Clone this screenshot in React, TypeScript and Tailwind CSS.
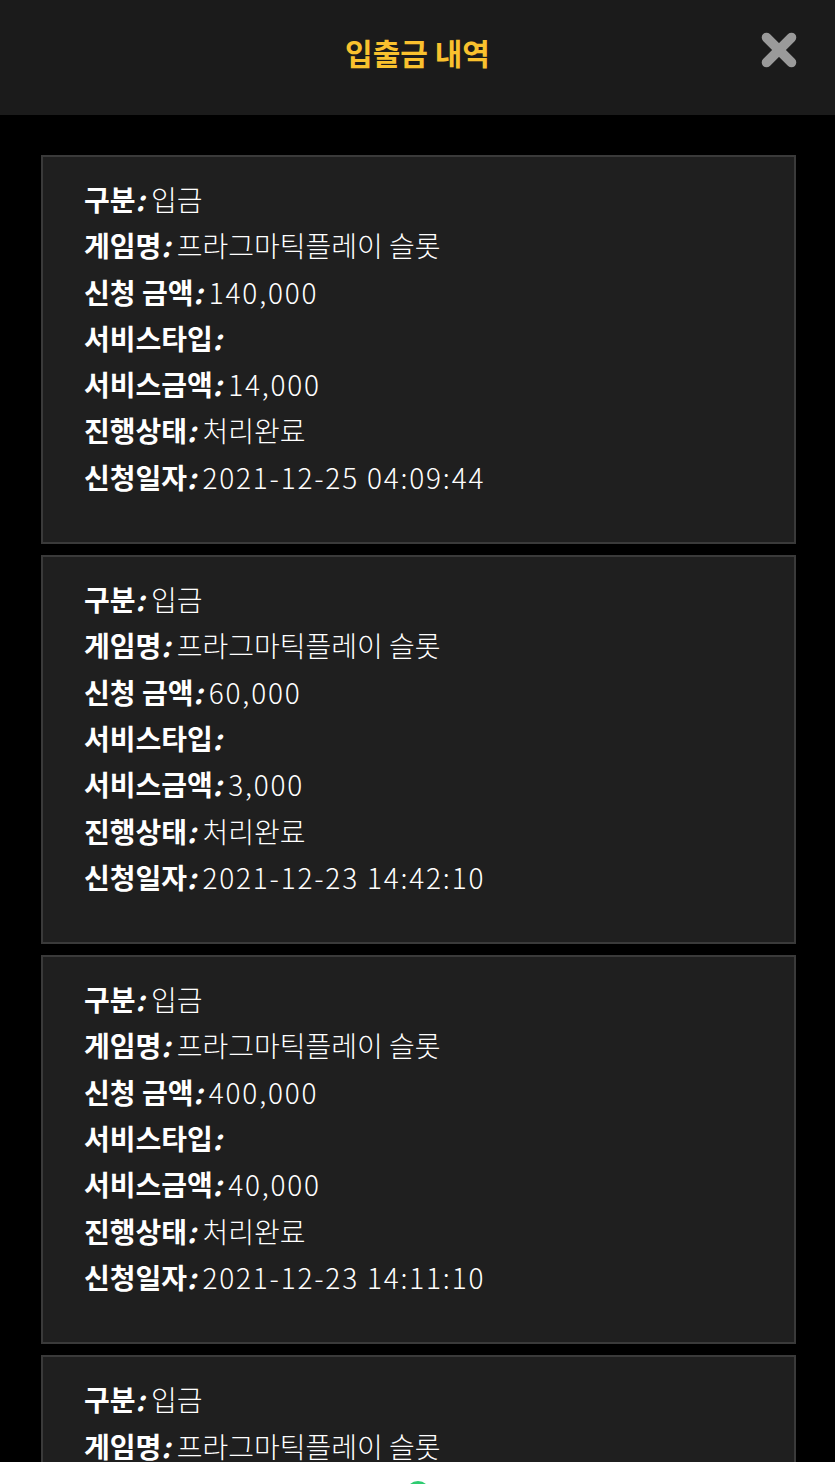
import { X } from 'lucide-react'

type Row = { label: string; value: string }

const history: Row[][] = [
  [
    { label: '구분', value: '입금' },
    { label: '게임명', value: '프라그마틱플레이 슬롯' },
    { label: '신청 금액', value: '140,000' },
    { label: '서비스타입', value: '' },
    { label: '서비스금액', value: '14,000' },
    { label: '진행상태', value: '처리완료' },
    { label: '신청일자', value: '2021-12-25 04:09:44' },
  ],
  [
    { label: '구분', value: '입금' },
    { label: '게임명', value: '프라그마틱플레이 슬롯' },
    { label: '신청 금액', value: '60,000' },
    { label: '서비스타입', value: '' },
    { label: '서비스금액', value: '3,000' },
    { label: '진행상태', value: '처리완료' },
    { label: '신청일자', value: '2021-12-23 14:42:10' },
  ],
  [
    { label: '구분', value: '입금' },
    { label: '게임명', value: '프라그마틱플레이 슬롯' },
    { label: '신청 금액', value: '400,000' },
    { label: '서비스타입', value: '' },
    { label: '서비스금액', value: '40,000' },
    { label: '진행상태', value: '처리완료' },
    { label: '신청일자', value: '2021-12-23 14:11:10' },
  ],
  [
    { label: '구분', value: '입금' },
    { label: '게임명', value: '프라그마틱플레이 슬롯' },
    { label: '신청 금액', value: '100,000' },
    { label: '서비스타입', value: '' },
    { label: '서비스금액', value: '10,000' },
    { label: '진행상태', value: '처리완료' },
    { label: '신청일자', value: '2021-12-22 20:15:31' },
  ],
]

// digits in the original font run wider than Noto's
const isNumeric = (v: string) => /^[\d,:\- ]+$/.test(v)

function HistoryCard({ rows }: { rows: Row[] }) {
  return (
    <div className="shrink-0 border-2 border-[#3a3a3a] bg-[#1f1f1f] pb-[42px] pl-[41px] pr-[39px] pt-[19px]">
      {rows.map(({ label, value }) => (
        <p key={label} className="h-[46.3px] whitespace-nowrap text-[28px] leading-[46px] text-white">
          <span className="font-bold">{label}</span>
          <span className="font-bold italic">:</span>{' '}
          <span className={isNumeric(value) ? 'font-light tracking-[1.8px]' : 'font-light'}>{value}</span>
        </p>
      ))}
    </div>
  )
}

export default function App() {
  return (
    <div className="flex h-[1484px] flex-col overflow-hidden bg-black font-['Noto_Sans_CJK_KR','Noto_Sans',sans-serif]">
      <header className="relative flex h-[115px] shrink-0 items-center justify-center bg-[#1b1b1b] pb-[10px]">
        <h1 className="text-[30px] font-bold text-[#f9c12e]">입출금 내역</h1>
        <button className="absolute right-[31px] top-[25px] text-[#9a9a9a]">
          <X size={50} strokeWidth={4.6} />
        </button>
      </header>

      <main className="flex flex-1 flex-col gap-[11px] overflow-hidden pl-[41px] pr-[39px] pt-[40px]">
        {history.map((rows, i) => (
          <HistoryCard key={i} rows={rows} />
        ))}
      </main>

      <footer className="relative flex h-[22px] shrink-0 justify-center overflow-hidden bg-white">
        <span className="mt-[19px] h-[24px] w-[24px] rounded-full bg-[#2ecc71]" />
      </footer>
    </div>
  )
}
